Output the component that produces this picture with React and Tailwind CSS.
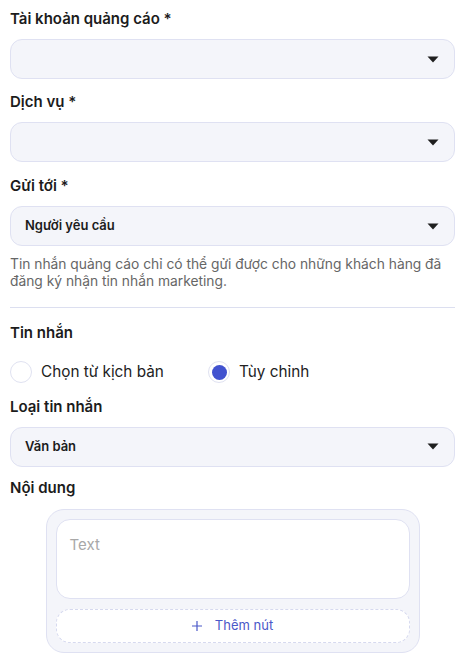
import React, { useState } from "react";

const Caret = () => (
  <svg width="12" height="7" viewBox="0 0 12 7" className="shrink-0">
    <path d="M0.5 0.5h11L6 6.5z" fill="#1f1f1f" />
  </svg>
);

const Label = ({ children, className = "" }) => (
  <div className={`text-[15px] leading-6 font-semibold text-[#1c1c1c] ${className}`}>{children}</div>
);

const Select = ({ value }) => (
  <div className="mt-2 h-10 flex items-center justify-between pl-[14px] pr-[15px] rounded-xl border border-[#dfe1f2] bg-[#f4f5fa]">
    <span className="text-[13px] font-semibold text-[#1c1c1c]">{value}</span>
    <Caret />
  </div>
);

const Radio = ({ checked, label, onClick }) => (
  <button type="button" onClick={onClick} className="flex items-center gap-[9px]">
    <span className="w-[22px] h-[22px] rounded-full border border-[#e0e2f1] bg-white flex items-center justify-center">
      {checked && <span className="w-[15px] h-[15px] rounded-full bg-[#4152cf]" />}
    </span>
    <span className="text-[15.3px] text-[#222]">{label}</span>
  </button>
);

export default function App() {
  const [mode, setMode] = useState("custom");

  return (
    <div className="w-[462px] bg-white pl-[10px] pr-[7px] pt-[7px] pb-3 font-['Inter',sans-serif]">
      <Label>Tài khoản quảng cáo *</Label>
      <Select value="" />

      <Label className="mt-[11px]">Dịch vụ *</Label>
      <Select value="" />

      <Label className="mt-[12px]">Gửi tới *</Label>
      <Select value="Người yêu cầu" />
      <p className="mt-[10px] text-[13.8px] leading-[17px] text-[#666]">
        Tin nhắn quảng cáo chỉ có thể gửi được cho những khách hàng đã đăng ký nhận tin nhắn marketing.
      </p>

      <div className="mt-[17px] border-t border-[#dcdff0]" />

      <Label className="mt-[13px]">Tin nhắn</Label>
      <div className="mt-[16px] flex items-center">
        <div className="w-[198px]">
          <Radio checked={mode === "script"} label="Chọn từ kịch bản" onClick={() => setMode("script")} />
        </div>
        <Radio checked={mode === "custom"} label="Tùy chỉnh" onClick={() => setMode("custom")} />
      </div>

      <Label className="mt-[11px]">Loại tin nhắn</Label>
      <Select value="Văn bản" />

      <Label className="mt-[9px]">Nội dung</Label>
      <div className="mt-[9px] mx-auto w-[374px] rounded-[18px] border border-[#dfe1f2] bg-[#f4f5fa] p-[9px]">
        <div className="h-20 rounded-[14px] border border-[#dfe1f2] bg-white px-[13px] pt-[12px]">
          <span className="text-[15px] text-[#a8a8a8]">Text</span>
        </div>
        <button
          type="button"
          className="mt-[10px] w-full h-[34px] rounded-[14px] border border-dashed border-[#d6d9ef] bg-white flex items-center justify-center gap-[13px] text-[13px] text-[#4a58c8]"
        >
          <svg width="10" height="10" viewBox="0 0 10 10">
            <path d="M5 0v10M0 5h10" stroke="#4a58c8" strokeWidth="1.2" />
          </svg>
          Thêm nút
        </button>
      </div>
    </div>
  );
}
